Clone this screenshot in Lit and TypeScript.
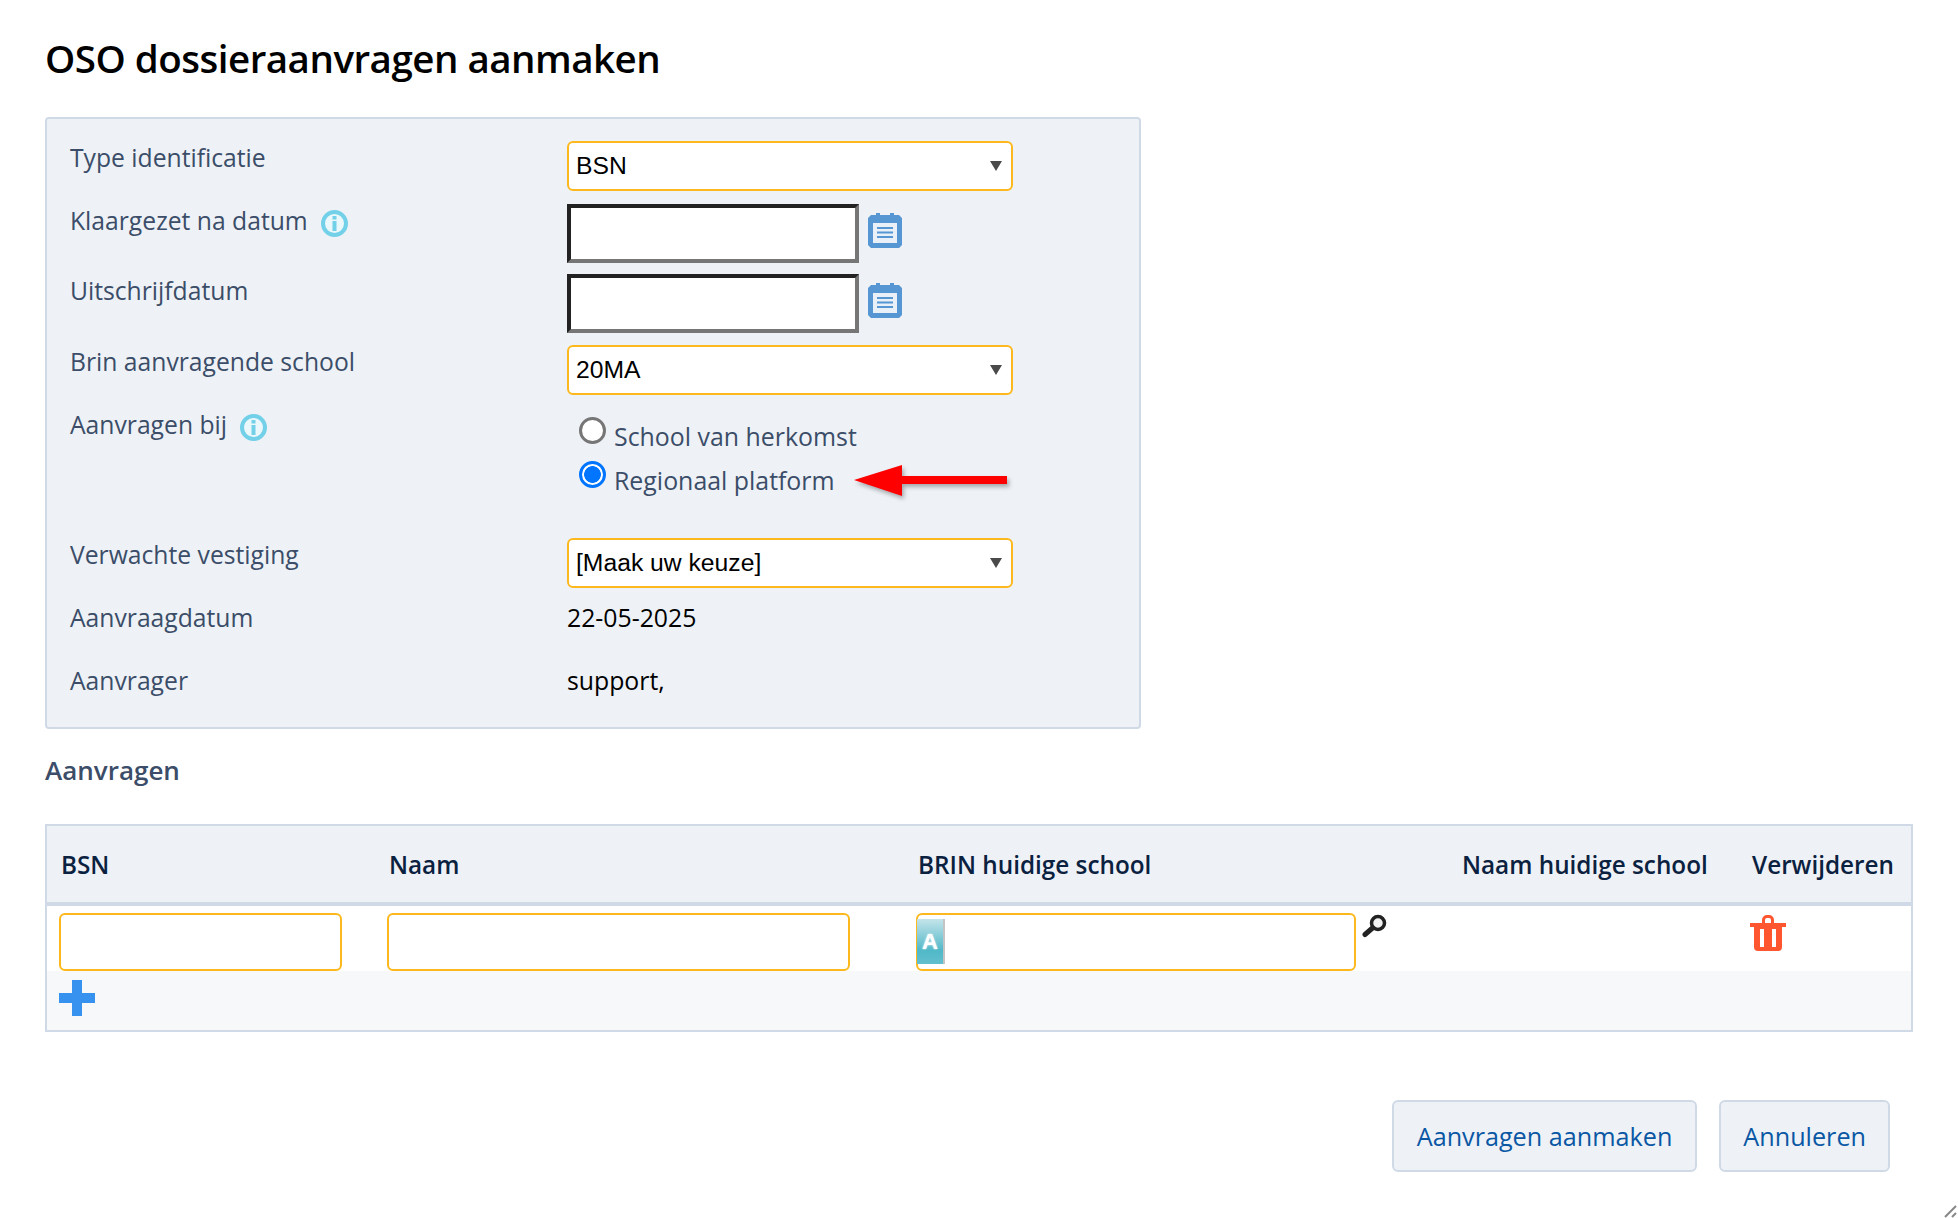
import { LitElement, html, css } from "lit";
import { customElement } from "lit/decorators.js";

const info = html`<svg class="info" width="27" height="27" viewBox="0 0 27 27"><circle cx="13.5" cy="13.5" r="11.5" fill="#eaf7fb" stroke="#72d0e8" stroke-width="4"/><rect x="11.5" y="6" width="4" height="3.5" fill="#72d0e8"/><rect x="11.5" y="11" width="4" height="10" fill="#72d0e8"/></svg>`;

const calendar = html`<svg class="cal" width="34" height="36" viewBox="0 0 34 36"><path d="M3 3h5V1h4v2h10V1h4v2h5l3 3v27l-3 3H3l-3-3V6z" fill="#5596d3"/><rect x="5" y="11" width="24" height="20" fill="#e9f0f7"/><path d="M9 16h16M9 20.500h16M9 25h16" stroke="#5596d3" stroke-width="2"/></svg>`;

const caret = html`<svg class="caret" width="12" height="10" viewBox="0 0 12 10"><path d="M0 0h12L6 10z" fill="#4a4a4a"/></svg>`;

@customElement("app-root")
export class AppRoot extends LitElement {
  static styles = css`
    :host {
      display: block;
      position: relative;
      height: 1218px;
      overflow: hidden;
      background: #fff;
      font-family: "Open Sans", sans-serif;
      font-size: 24.7px;
      color: #3b4d68;
      box-sizing: border-box;
      padding: 0 45px;
    }
    * { box-sizing: border-box; }
    h1 {
      margin: 0;
      padding-top: 32px;
      height: 117px;
      font-size: 38.500px;
      font-weight: 600;
      letter-spacing: -0.5px;
      line-height: 52px;
      color: #000;
    }
    .panel {
      width: 1096px;
      height: 612px;
      background: #eef2f6;
      border: 2px solid #cfdae6;
      border-radius: 4px;
      padding: 22px 23px 0;
    }
    .row {
      display: grid;
      grid-template-columns: 497px 1fr;
      align-items: start;
    }
    .r1 { margin-bottom: 13px; }
    .r1 .label { margin-top: -0.5px; }
    .r2 { margin-bottom: 11px; }
    .r3 { margin-bottom: 12px; }
    .r4 { margin-bottom: 13px; }
    .r5 { margin-bottom: 130px; height: 0; }
    .r6 { margin-bottom: 13px; }
    .r7 { margin-bottom: 30px; }
    .label {
      display: flex;
      align-items: flex-start;
      gap: 13px;
      line-height: 33px;
    }
    .info { flex: none; margin-top: 5.5px; }
    .value { color: #000; line-height: 33px; font-size: 24.8px; }
    .select {
      position: relative;
      width: 446px;
      height: 50px;
    }
    select {
      appearance: none;
      width: 100%;
      height: 100%;
      border: 2px solid #fdb81e;
      border-radius: 6px;
      background: #fff;
      padding: 0 7px 2px;
      font-family: "Liberation Sans", Arial, sans-serif;
      font-size: 24.7px;
      color: #000;
    }
    .caret {
      position: absolute;
      right: 11px;
      top: 20px;
      pointer-events: none;
    }
    .date {
      display: flex;
      align-items: flex-start;
      gap: 9px;
    }
    .date input {
      width: 292px;
      height: 59px;
      border: 4px solid;
      border-color: #222 #767676 #767676 #222;
      background: #fff;
    }
    .cal { margin-top: 8px; }
    .radios {
      display: flex;
      flex-direction: column;
      gap: 8px;
      padding: 9px 0 0 12px;
    }
    .radio {
      display: flex;
      align-items: flex-start;
      gap: 8px;
      line-height: 33px;
      font-size: 24.9px;
    }
    .radio input {
      appearance: none;
      width: 27px;
      height: 27px;
      margin: 0;
      flex: none;
      border: 3px solid #767676;
      border-radius: 50%;
      background: #fff;
    }
    .radio input:checked {
      border-color: #0075ff;
      background: radial-gradient(circle, #0075ff 0 8px, #fff 8.7px);
    }
    .radio span { padding-top: 3px; }
    .arrow {
      position: absolute;
      left: 854px;
      top: 461px;
      filter: drop-shadow(2px 3px 2px rgba(0,0,0,.3));
    }
    h2 {
      margin: 0;
      padding-top: 24px;
      height: 95px;
      font-size: 26px;
      font-weight: 600;
      line-height: 35px;
      color: #3b4d68;
    }
    .table {
      width: 1868px;
      height: 208px;
      border: 2px solid #cfdae6;
      background: #f7f8fa;
    }
    .cols {
      display: grid;
      grid-template-columns: 328px 529px 544px 290px 171px;
    }
    .head {
      height: 80px;
      background: #eef2f6;
      border-bottom: 4px solid #cfdae6;
      font-weight: 600;
      font-size: 24.3px;
      color: #0b2140;
      line-height: 33px;
    }
    .head > div { padding: 22px 0 0 14px; white-space: nowrap; }
    .body { height: 65px; background: #fff; }
    .body > div { padding: 7px 0 0 12px; }
    .field {
      display: block;
      height: 58px;
      border: 2px solid #fdb81e;
      border-radius: 6px;
      background: #fff;
    }
    .f1 { width: 283px; }
    .f2 { width: 463px; }
    .brin { display: flex; align-items: flex-start; gap: 6px; }
    .autofield {
      position: relative;
      width: 440px;
      height: 58px;
      flex: none;
    }
    .autofield input { width: 100%; height: 100%; padding-left: 30px; }
    .badge {
      position: absolute;
      left: 1px;
      top: 6px;
      width: 28px;
      height: 45px;
      background: linear-gradient(#c5e4ea, #50b8c8 70%, #62bfcd);
      border-right: 2px solid #c4c4c4;
      color: #fff;
      font-family: "Liberation Sans", Arial, sans-serif;
      font-weight: 700;
      font-size: 22px;
      line-height: 45px;
      text-align: center;
      text-shadow: 0 0 2px #fff;
    }
    .mag { flex: none; margin-top: 1px; }
    .trash { display: block; margin-top: 2px; }
    .add { padding: 9px 0 0 12px; }
    .add svg { display: block; }
    .actions {
      display: flex;
      justify-content: flex-end;
      gap: 22px;
      width: 1845px;
      padding-top: 68px;
    }
    button {
      height: 72px;
      border: 2px solid #cfdae6;
      border-radius: 6px;
      background: #eef2f6;
      color: #0a57a4;
      font-family: "Open Sans", sans-serif;
      font-size: 25.2px;
      padding: 0 23px;
    }
    button.cancel { padding: 0 22px; }
    .grip {
      position: absolute;
      right: 0;
      bottom: 0;
    }
  `;

  render() {
    return html`
      <h1>OSO dossieraanvragen aanmaken</h1>
      <section class="panel">
        <div class="row r1">
          <div class="label">Type identificatie</div>
          <div class="select"><select><option>BSN</option></select>${caret}</div>
        </div>
        <div class="row r2">
          <div class="label">Klaargezet na datum ${info}</div>
          <div class="date"><input type="text" />${calendar}</div>
        </div>
        <div class="row r3">
          <div class="label">Uitschrijfdatum</div>
          <div class="date"><input type="text" />${calendar}</div>
        </div>
        <div class="row r4">
          <div class="label">Brin aanvragende school</div>
          <div class="select"><select><option>20MA</option></select>${caret}</div>
        </div>
        <div class="row r5">
          <div class="label">Aanvragen bij ${info}</div>
          <div class="radios">
            <label class="radio"><input type="radio" name="bij" /><span>School van herkomst</span></label>
            <label class="radio"><input type="radio" name="bij" checked /><span>Regionaal platform</span></label>
          </div>
        </div>
        <div class="row r6">
          <div class="label">Verwachte vestiging</div>
          <div class="select"><select><option>[Maak uw keuze]</option></select>${caret}</div>
        </div>
        <div class="row r7">
          <div class="label">Aanvraagdatum</div>
          <div class="value">22-05-2025</div>
        </div>
        <div class="row">
          <div class="label">Aanvrager</div>
          <div class="value">support,</div>
        </div>
      </section>
      <svg class="arrow" width="160" height="40" viewBox="0 0 160 40"><path d="M0 19 48 4v11h105v8H48v12z" fill="#f00"/></svg>
      <h2>Aanvragen</h2>
      <section class="table">
        <div class="cols head">
          <div>BSN</div><div>Naam</div><div>BRIN huidige school</div><div>Naam huidige school</div><div>Verwijderen</div>
        </div>
        <div class="cols body">
          <div><input class="field f1" type="text" /></div>
          <div><input class="field f2" type="text" /></div>
          <div class="brin">
            <div class="autofield"><input class="field" type="text" /><span class="badge">A</span></div>
            <svg class="mag" width="26" height="24" viewBox="0 0 26 24">
              <circle cx="16" cy="9" r="6.500" fill="#f2f2f2" stroke="#222" stroke-width="3.500"/>
              <path d="M10.500 14 3 20.500" stroke="#222" stroke-width="5" stroke-linecap="round"/>
            </svg>
          </div>
          <div></div>
          <div>
            <svg class="trash" width="36" height="36" viewBox="0 0 36 36">
              <path d="M0 8h12V5a5 5 0 0 1 5-5h2a5 5 0 0 1 5 5v3h12v4h-4v20a4 4 0 0 1-4 4H8a4 4 0 0 1-4-4V12H0z M15 8h6V5a2 2 0 0 0-2-2h-2a2 2 0 0 0-2 2z M10 14v18h4V14z M22 14v18h4V14z" fill="#ff5630" fill-rule="evenodd"/>
            </svg>
          </div>
        </div>
        <div class="add">
          <svg width="36" height="36" viewBox="0 0 36 36"><path d="M13 0h10v13h13v10H23v13H13V23H0V13h13z" fill="#3791ee"/></svg>
        </div>
      </section>
      <div class="actions">
        <button>Aanvragen aanmaken</button>
        <button class="cancel">Annuleren</button>
      </div>
      <svg class="grip" width="14" height="14" viewBox="0 0 14 14"><path d="M1 13 12 2M8 13l4-4" stroke="#888" stroke-width="2" fill="none"/></svg>
    `;
  }
}
